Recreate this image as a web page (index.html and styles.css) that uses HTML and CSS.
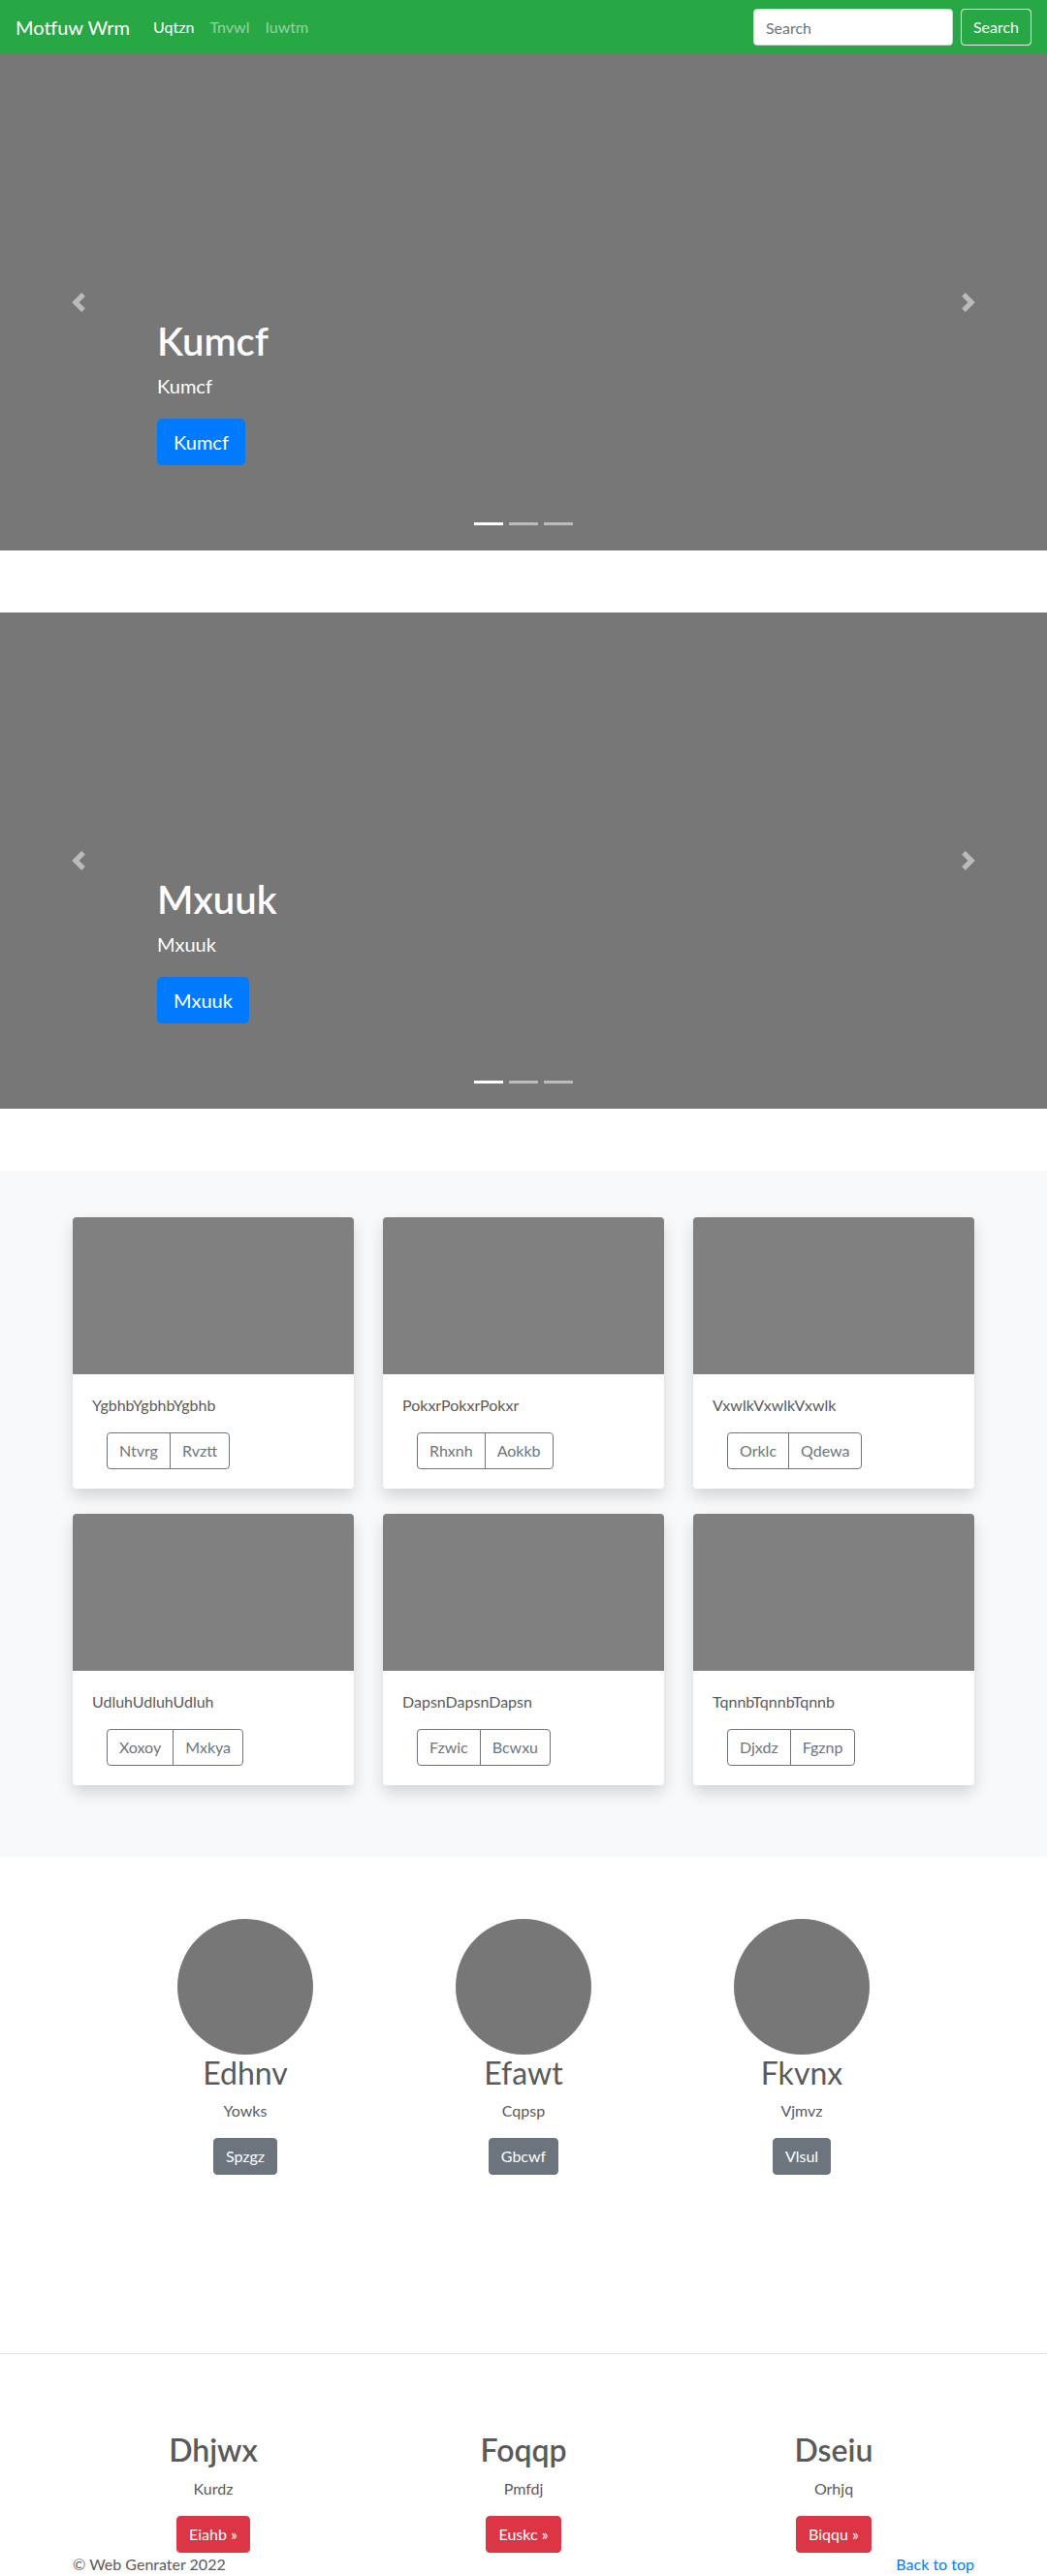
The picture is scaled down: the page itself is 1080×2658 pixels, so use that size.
FILE: index.html
```html
<!DOCTYPE html>
<html lang="en">
<head>
<meta charset="utf-8">
<title>Motfuw Wrm</title>
<link rel="stylesheet" href="styles.css">
</head>
<body>
<nav class="navbar">
  <a class="brand" href="#">Motfuw Wrm</a>
  <ul class="nav">
    <li><a class="nav-link active" href="#">Uqtzn</a></li>
    <li><a class="nav-link" href="#">Tnvwl</a></li>
    <li><a class="nav-link" href="#">Iuwtm</a></li>
  </ul>
  <form class="search">
    <input class="search-input" type="text" placeholder="Search">
    <button class="btn btn-outline-light" type="button">Search</button>
  </form>
</nav>

<section class="carousel">
  <a class="control control-prev" href="#"><svg width="20" height="20" viewBox="0 0 8 8"><path fill="#fff" d="M5.25 0l-4 4 4 4 1.5-1.5L4.25 4l2.5-2.5L5.25 0z"/></svg></a>
  <a class="control control-next" href="#"><svg width="20" height="20" viewBox="0 0 8 8"><path fill="#fff" d="M2.75 0l-1.5 1.5L3.75 4l-2.5 2.5L2.75 8l4-4-4-4z"/></svg></a>
  <div class="caption">
    <h1>Kumcf</h1>
    <p class="lead">Kumcf</p>
    <div class="cta"><a class="btn btn-lg btn-primary" href="#">Kumcf</a></div>
  </div>
  <ol class="indicators"><li class="active"></li><li></li><li></li></ol>
</section>

<section class="carousel">
  <a class="control control-prev" href="#"><svg width="20" height="20" viewBox="0 0 8 8"><path fill="#fff" d="M5.25 0l-4 4 4 4 1.5-1.5L4.25 4l2.5-2.5L5.25 0z"/></svg></a>
  <a class="control control-next" href="#"><svg width="20" height="20" viewBox="0 0 8 8"><path fill="#fff" d="M2.75 0l-1.5 1.5L3.75 4l-2.5 2.5L2.75 8l4-4-4-4z"/></svg></a>
  <div class="caption">
    <h1>Mxuuk</h1>
    <p class="lead">Mxuuk</p>
    <div class="cta"><a class="btn btn-lg btn-primary" href="#">Mxuuk</a></div>
  </div>
  <ol class="indicators"><li class="active"></li><li></li><li></li></ol>
</section>

<section class="album">
  <div class="container card-grid">
    <div class="card">
      <div class="card-img"></div>
      <div class="card-body">
        <p class="card-text">YgbhbYgbhbYgbhb</p>
        <div class="btn-group"><button class="btn btn-outline-secondary" type="button">Ntvrg</button><button class="btn btn-outline-secondary" type="button">Rvztt</button></div>
      </div>
    </div>
    <div class="card">
      <div class="card-img"></div>
      <div class="card-body">
        <p class="card-text">PokxrPokxrPokxr</p>
        <div class="btn-group"><button class="btn btn-outline-secondary" type="button">Rhxnh</button><button class="btn btn-outline-secondary" type="button">Aokkb</button></div>
      </div>
    </div>
    <div class="card">
      <div class="card-img"></div>
      <div class="card-body">
        <p class="card-text">VxwlkVxwlkVxwlk</p>
        <div class="btn-group"><button class="btn btn-outline-secondary" type="button">Orklc</button><button class="btn btn-outline-secondary" type="button">Qdewa</button></div>
      </div>
    </div>
    <div class="card">
      <div class="card-img"></div>
      <div class="card-body">
        <p class="card-text">UdluhUdluhUdluh</p>
        <div class="btn-group"><button class="btn btn-outline-secondary" type="button">Xoxoy</button><button class="btn btn-outline-secondary" type="button">Mxkya</button></div>
      </div>
    </div>
    <div class="card">
      <div class="card-img"></div>
      <div class="card-body">
        <p class="card-text">DapsnDapsnDapsn</p>
        <div class="btn-group"><button class="btn btn-outline-secondary" type="button">Fzwic</button><button class="btn btn-outline-secondary" type="button">Bcwxu</button></div>
      </div>
    </div>
    <div class="card">
      <div class="card-img"></div>
      <div class="card-body">
        <p class="card-text">TqnnbTqnnbTqnnb</p>
        <div class="btn-group"><button class="btn btn-outline-secondary" type="button">Djxdz</button><button class="btn btn-outline-secondary" type="button">Fgznp</button></div>
      </div>
    </div>
  </div>
</section>

<section class="marketing">
  <div class="marketing-col">
    <div class="avatar"></div>
    <h2>Edhnv</h2>
    <p>Yowks</p>
    <p class="btn-line"><a class="btn btn-secondary" href="#">Spzgz</a></p>
  </div>
  <div class="marketing-col">
    <div class="avatar"></div>
    <h2>Efawt</h2>
    <p>Cqpsp</p>
    <p class="btn-line"><a class="btn btn-secondary" href="#">Gbcwf</a></p>
  </div>
  <div class="marketing-col">
    <div class="avatar"></div>
    <h2>Fkvnx</h2>
    <p>Vjmvz</p>
    <p class="btn-line"><a class="btn btn-secondary" href="#">Vlsul</a></p>
  </div>
</section>

<hr class="divider">

<section class="container features">
  <div class="feature">
    <h2>Dhjwx</h2>
    <p>Kurdz</p>
    <div class="btn-line"><a class="btn btn-danger" href="#">Eiahb »</a></div>
  </div>
  <div class="feature">
    <h2>Foqqp</h2>
    <p>Pmfdj</p>
    <div class="btn-line"><a class="btn btn-danger" href="#">Euskc »</a></div>
  </div>
  <div class="feature">
    <h2>Dseiu</h2>
    <p>Orhjq</p>
    <div class="btn-line"><a class="btn btn-danger" href="#">Biqqu »</a></div>
  </div>
</section>

<footer class="container footer">
  <p>© Web Genrater 2022</p>
  <p><a class="top-link" href="#">Back to top</a></p>
</footer>
</body>
</html>
```

FILE: styles.css
```css
* { box-sizing: border-box; }

html, body {
  margin: 0;
  padding: 0;
}

body {
  font-family: Lato, "Open Sans", "Noto Sans", sans-serif;
  font-size: 16px;
  line-height: 1.5;
  color: #5a5a5a;
  background: #fff;
}

a { text-decoration: none; }

p { margin: 0; }

h1, h2 { margin: 0; }

.container {
  width: 930px;
  margin-left: auto;
  margin-right: auto;
}

/* ---------- buttons ---------- */
.btn {
  display: inline-block;
  font-family: inherit;
  font-size: 16px;
  line-height: 24px;
  padding: 6px 12px;
  border: 1px solid transparent;
  border-radius: 4px;
  background: transparent;
  font-weight: 400;
  cursor: pointer;
  text-align: center;
}

.btn-lg {
  font-size: 20px;
  line-height: 30px;
  padding: 8px 16px;
  border-radius: 4.8px;
}

.btn-primary { background: #007bff; border-color: #007bff; color: #fff; }
.btn-secondary { background: #6c757d; border-color: #6c757d; color: #fff; }
.btn-danger { background: #dc3545; border-color: #dc3545; color: #fff; }
.btn-outline-light { color: #f8f9fa; border-color: #f8f9fa; }
.btn-outline-secondary { color: #6c757d; border-color: #6c757d; background: #fff; }

/* ---------- navbar ---------- */
.navbar {
  display: flex;
  align-items: center;
  height: 56px;
  padding: 8px 16px;
  background: #28a745;
}

.brand {
  font-size: 20px;
  line-height: 30px;
  padding: 5px 0;
  margin-right: 16px;
  color: #fff;
}

.nav {
  display: flex;
  list-style: none;
  margin: 0 auto 0 0;
  padding: 0;
}

.nav-link {
  display: block;
  padding: 8px;
  line-height: 24px;
  color: rgba(255, 255, 255, 0.5);
}

.nav-link.active { color: #fff; }

.search {
  display: flex;
  align-items: center;
  margin: 0;
}

.search-input {
  width: 206px;
  height: 38px;
  padding: 6px 12px;
  margin-right: 8px;
  font-family: inherit;
  font-size: 16px;
  line-height: 24px;
  color: #495057;
  background: #fff;
  border: 1px solid #ced4da;
  border-radius: 4px;
}

.search-input::placeholder { color: #6c757d; }

/* ---------- carousel ---------- */
.carousel {
  position: relative;
  height: 512px;
  margin-bottom: 64px;
  background: #777;
  display: flex;
  flex-direction: column;
  justify-content: flex-end;
  padding: 0 15% 68px;
}

.caption {
  color: #fff;
  position: relative;
  z-index: 2;
}

.caption h1 {
  font-size: 40px;
  line-height: 1.2;
  font-weight: 600;
  margin-bottom: 8px;
}

.caption .lead {
  font-size: 20px;
  line-height: 1.4;
  margin-bottom: 20px;
}

.cta {
  display: flex;
  margin-bottom: 20px;
}

.control {
  position: absolute;
  top: 0;
  bottom: 0;
  width: 15%;
  display: flex;
  align-items: center;
  justify-content: center;
  opacity: 0.5;
  z-index: 1;
}

.control svg { display: block; }

.control-prev { left: 0; }
.control-next { right: 0; }

.indicators {
  position: absolute;
  left: 15%;
  right: 15%;
  bottom: 0;
  margin: 0 0 16px;
  padding: 0;
  list-style: none;
  display: flex;
  justify-content: center;
  z-index: 3;
}

.indicators li {
  width: 30px;
  height: 3px;
  margin: 10px 3px;
  background: #fff;
  opacity: 0.5;
}

.indicators li.active { opacity: 1; }

/* ---------- album ---------- */
.album {
  background: #f8f9fa;
  padding: 48px 0;
}

.card-grid {
  display: grid;
  grid-template-columns: repeat(3, 1fr);
  column-gap: 30px;
  row-gap: 26px;
  padding-bottom: 26px;
}

.card {
  background: #fff;
  border-radius: 4px;
  overflow: hidden;
  box-shadow: 0 8px 16px rgba(0, 0, 0, 0.15);
}

.card-img {
  height: 162px;
  background: #808080;
}

.card-body {
  padding: 20px;
}

.card-text {
  margin-bottom: 16px;
}

.btn-group {
  display: inline-flex;
  margin-left: 15px;
}

.btn-group .btn:first-child {
  border-top-right-radius: 0;
  border-bottom-right-radius: 0;
}

.btn-group .btn + .btn {
  margin-left: -1px;
  border-top-left-radius: 0;
  border-bottom-left-radius: 0;
}

/* ---------- marketing ---------- */
.marketing {
  display: grid;
  grid-template-columns: repeat(3, 287px);
  justify-content: center;
  padding-top: 64px;
}

.marketing-col {
  text-align: center;
}

.avatar {
  width: 140px;
  height: 140px;
  border-radius: 50%;
  background: #777;
  margin: 0 auto;
}

.marketing h2 {
  font-size: 32px;
  line-height: 1.2;
  font-weight: 400;
  margin-bottom: 8px;
}

.marketing p {
  margin: 0 12px 16px;
}

.divider {
  margin: 168px 0 80px;
  border: 0;
  border-top: 1px solid rgba(0, 0, 0, 0.1);
  height: 0;
}

/* ---------- features ---------- */
.features {
  display: grid;
  grid-template-columns: repeat(3, 1fr);
  column-gap: 30px;
}

.feature {
  text-align: center;
}

.feature h2 {
  font-size: 32px;
  line-height: 1.2;
  font-weight: 600;
  margin-bottom: 8px;
}

.feature p {
  margin-bottom: 16px;
}

.feature .btn-line {
  display: flex;
  justify-content: center;
}

/* ---------- footer ---------- */
.footer {
  display: flex;
  justify-content: space-between;
}

.top-link { color: #007bff; }
```
